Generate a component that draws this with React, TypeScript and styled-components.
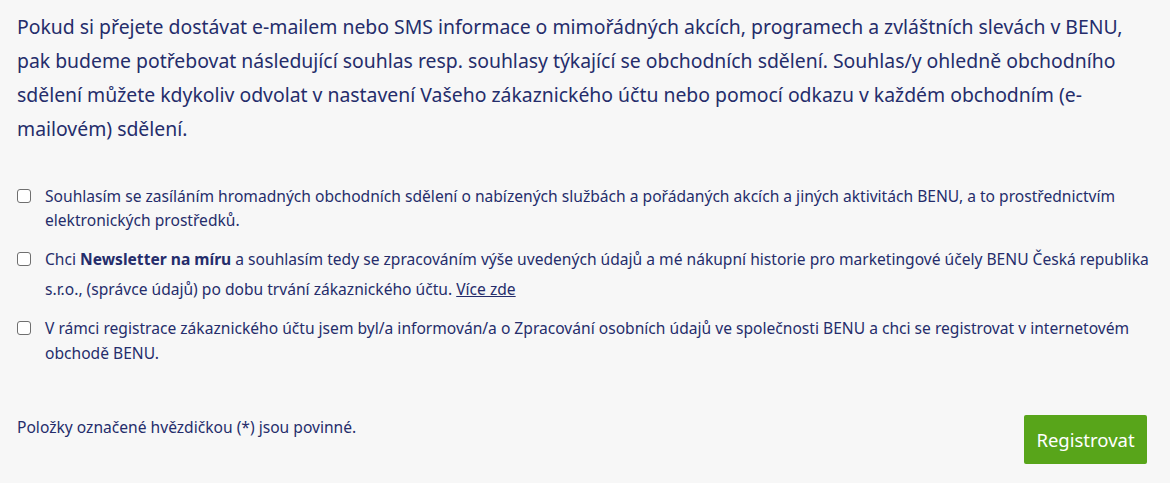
import React from 'react';
import styled, { createGlobalStyle } from 'styled-components';

const GlobalStyle = createGlobalStyle`
    html, body {
        margin: 0;
        padding: 0;
        background: #f7f7f7;
    }
    body {
        font-family: 'Noto Sans', 'Open Sans', sans-serif;
        color: #252d6b;
    }
`;

const Page = styled.div`
    display: flex;
    flex-direction: column;
    padding: 10px 20px 0 17px;
    width: 1170px;
    height: 483px;
    box-sizing: border-box;
`;

const Intro = styled.p`
    margin: 0 0 38px;
    padding-right: 10px;
    font-size: 19.4px;
    line-height: 34px;
    color: #252d6b;
`;

const ConsentList = styled.div`
    display: flex;
    flex-direction: column;
    gap: 12px;
`;

const ConsentRow = styled.label<{ $lh?: number }>`
    display: flex;
    align-items: flex-start;
    gap: 14px;
    font-size: 15.6px;
    line-height: ${(p) => p.$lh ?? 24}px;
    color: #252d6b;
    cursor: pointer;

    b {
        font-weight: 700;
    }

    a {
        color: #252d6b;
        text-decoration: underline;
    }
`;

const Box = styled.span<{ $top?: number }>`
    flex: 0 0 auto;
    width: 12px;
    height: 12px;
    margin-top: ${(p) => p.$top ?? 5}px;
    border: 1.5px solid #6f6f6f;
    border-radius: 3px;
    background: #fff;
`;

const Footer = styled.div`
    display: flex;
    justify-content: space-between;
    align-items: flex-start;
    margin-top: 49px;
    padding-right: 3px;
`;

const Note = styled.span`
    font-size: 15.6px;
    line-height: 20px;
    margin-top: 2px;
    color: #252d6b;
`;

const SubmitButton = styled.button`
    background: #58a51a;
    color: #fff;
    border: none;
    border-radius: 2px;
    width: 123px;
    height: 49px;
    font-family: 'Noto Sans', sans-serif;
    font-size: 18.5px;
    cursor: pointer;
`;

export default function App() {
    return (
        <>
            <GlobalStyle />
            <Page>
                <Intro>
                    Pokud si přejete dostávat e-mailem nebo SMS informace o mimořádných akcích, programech a
                    zvláštních slevách v BENU, pak budeme potřebovat následující souhlas resp. souhlasy týkající se
                    obchodních sdělení. Souhlas/y ohledně obchodního sdělení můžete kdykoliv odvolat v nastavení
                    Vašeho zákaznického účtu nebo pomocí odkazu v každém obchodním (e-mailovém) sdělení.
                </Intro>
                <ConsentList>
                    <ConsentRow>
                        <Box />
                        <span>
                            Souhlasím se zasíláním hromadných obchodních sdělení o nabízených službách a pořádaných
                            akcích a jiných aktivitách BENU, a to prostřednictvím elektronických prostředků.
                        </span>
                    </ConsentRow>
                    <ConsentRow $lh={30}>
                        <Box $top={8} />
                        <span>
                            Chci <b>Newsletter na míru</b> a souhlasím tedy se zpracováním výše uvedených údajů a mé
                            nákupní historie pro marketingové účely BENU Česká republika s.r.o., (správce údajů) po
                            dobu trvání zákaznického účtu. <a href="#">Více zde</a>
                        </span>
                    </ConsentRow>
                    <ConsentRow $lh={25}>
                        <Box />
                        <span>
                            V rámci registrace zákaznického účtu jsem byl/a informován/a o Zpracování osobních údajů
                            ve společnosti BENU a chci se registrovat v internetovém obchodě BENU.
                        </span>
                    </ConsentRow>
                </ConsentList>
                <Footer>
                    <Note>Položky označené hvězdičkou (*) jsou povinné.</Note>
                    <SubmitButton>Registrovat</SubmitButton>
                </Footer>
            </Page>
        </>
    );
}
